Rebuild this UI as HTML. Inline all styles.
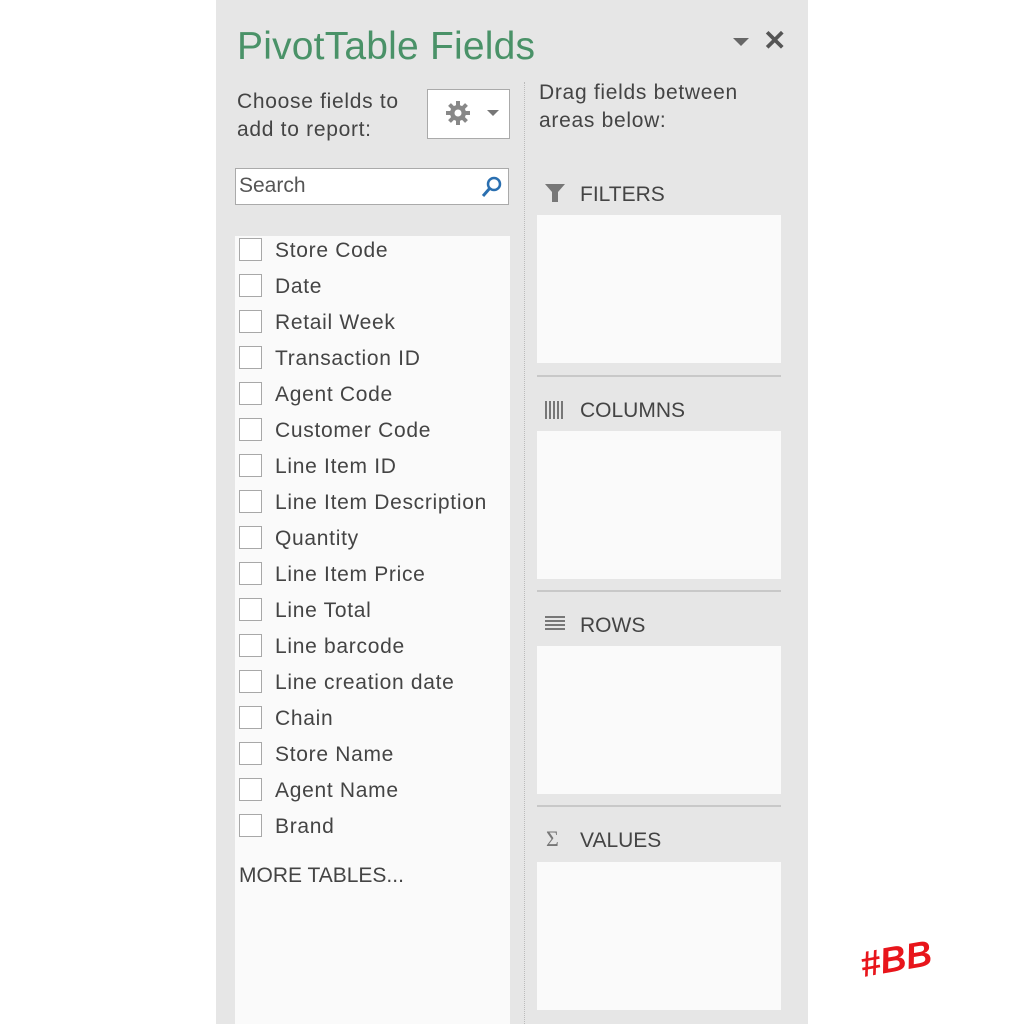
<!DOCTYPE html>
<html><head><style>
body{margin:0;width:1024px;height:1024px;background:#fff;position:relative;overflow:hidden;font-family:"Liberation Sans",sans-serif;}
.p{position:absolute;left:216px;top:0;width:592px;height:1024px;background:#e6e6e6;}
.a{position:absolute;}
.t{color:#444;font-size:21px;letter-spacing:0.7px;}
.cb{position:absolute;left:239px;width:21px;height:21px;border:1px solid #a8a8a8;background:#fff;}
.box{position:absolute;left:537px;width:244px;background:#fafafa;}
.sep{position:absolute;left:537px;width:244px;height:2px;background:#c8c8c8;}
</style></head><body>
<div class="p"></div>
<div class="a" style="left:237px;top:25px;font-size:39px;color:#4a9268;letter-spacing:0.2px">PivotTable Fields</div>
<div class="a" style="left:733px;top:38px;width:0;height:0;border-left:8px solid transparent;border-right:8px solid transparent;border-top:8px solid #666"></div>
<div class="a" style="left:763px;top:24px;font-size:28px;color:#555;font-weight:bold">✕</div>
<div class="a t" style="left:237px;top:88px;line-height:28px">Choose fields to<br>add to report:</div>
<div class="a" style="left:427px;top:89px;width:81px;height:48px;background:#fff;border:1px solid #aaa"></div>
<svg class="a" style="left:446px;top:101px" width="24" height="24" viewBox="0 0 24 24"><g fill="#888"><circle cx="12" cy="12" r="8"/><rect x="10" y="0" width="4" height="24"/><rect x="0" y="10" width="24" height="4"/><rect x="10" y="0" width="4" height="24" transform="rotate(45 12 12)"/><rect x="10" y="0" width="4" height="24" transform="rotate(-45 12 12)"/></g><circle cx="12" cy="12" r="3.5" fill="#fff"/></svg>
<div class="a" style="left:487px;top:110px;border-left:6px solid transparent;border-right:6px solid transparent;border-top:6px solid #777"></div>
<div class="a" style="left:524px;top:82px;width:0;height:942px;border-left:1px dotted #bbb"></div>
<div class="a t" style="left:539px;top:79px;line-height:28px">Drag fields between<br>areas below:</div>
<div class="a" style="left:235px;top:168px;width:272px;height:35px;background:#fff;border:1px solid #aaa"></div>
<div class="a" style="left:239px;top:174px;font-size:21px;color:#555">Search</div>
<svg class="a" style="left:480px;top:175px" width="24" height="24"><circle cx="14" cy="9" r="6" fill="none" stroke="#2a6fb0" stroke-width="2.5"/><line x1="10" y1="13" x2="3" y2="21" stroke="#2a6fb0" stroke-width="3"/></svg>
<div class="a" style="left:235px;top:236px;width:275px;height:788px;background:#fafafa"></div>
<div class="cb" style="top:238px"></div><div class="a t" style="left:275px;top:239px">Store Code</div>
<div class="cb" style="top:274px"></div><div class="a t" style="left:275px;top:275px">Date</div>
<div class="cb" style="top:310px"></div><div class="a t" style="left:275px;top:311px">Retail Week</div>
<div class="cb" style="top:346px"></div><div class="a t" style="left:275px;top:347px">Transaction ID</div>
<div class="cb" style="top:382px"></div><div class="a t" style="left:275px;top:383px">Agent Code</div>
<div class="cb" style="top:418px"></div><div class="a t" style="left:275px;top:419px">Customer Code</div>
<div class="cb" style="top:454px"></div><div class="a t" style="left:275px;top:455px">Line Item ID</div>
<div class="cb" style="top:490px"></div><div class="a t" style="left:275px;top:491px">Line Item Description</div>
<div class="cb" style="top:526px"></div><div class="a t" style="left:275px;top:527px">Quantity</div>
<div class="cb" style="top:562px"></div><div class="a t" style="left:275px;top:563px">Line Item Price</div>
<div class="cb" style="top:598px"></div><div class="a t" style="left:275px;top:599px">Line Total</div>
<div class="cb" style="top:634px"></div><div class="a t" style="left:275px;top:635px">Line barcode</div>
<div class="cb" style="top:670px"></div><div class="a t" style="left:275px;top:671px">Line creation date</div>
<div class="cb" style="top:706px"></div><div class="a t" style="left:275px;top:707px">Chain</div>
<div class="cb" style="top:742px"></div><div class="a t" style="left:275px;top:743px">Store Name</div>
<div class="cb" style="top:778px"></div><div class="a t" style="left:275px;top:779px">Agent Name</div>
<div class="cb" style="top:814px"></div><div class="a t" style="left:275px;top:815px">Brand</div>
<div class="a t" style="left:239px;top:864px;letter-spacing:0">MORE TABLES...</div>

<svg class="a" style="left:544px;top:182px" width="22" height="22"><path d="M1 2H21L14 10V20H8V10Z" fill="#777"/></svg>
<div class="a t" style="left:580px;top:183px;letter-spacing:0">FILTERS</div>
<div class="box" style="top:215px;height:148px"></div>
<div class="sep" style="top:375px"></div>
<div class="a" style="left:545px;top:401px;width:18px;height:18px;background:repeating-linear-gradient(90deg,#777 0 2px,transparent 2px 4px)"></div>
<div class="a t" style="left:580px;top:399px;letter-spacing:0">COLUMNS</div>
<div class="box" style="top:431px;height:148px"></div>
<div class="sep" style="top:590px"></div>
<div class="a" style="left:545px;top:616px;width:20px;height:16px;background:repeating-linear-gradient(180deg,#777 0 2px,transparent 2px 4px)"></div>
<div class="a t" style="left:580px;top:614px;letter-spacing:0">ROWS</div>
<div class="box" style="top:646px;height:148px"></div>
<div class="sep" style="top:805px"></div>
<div class="a" style="left:546px;top:826px;font-size:22px;color:#777;font-family:'Liberation Serif',serif">Σ</div>
<div class="a t" style="left:580px;top:829px;letter-spacing:0">VALUES</div>
<div class="box" style="top:862px;height:148px"></div>
<div class="a" style="left:860px;top:938px;font-size:36px;color:#e8151b;font-weight:bold;transform:rotate(-10deg);font-style:italic">#BB</div>
</body></html>
